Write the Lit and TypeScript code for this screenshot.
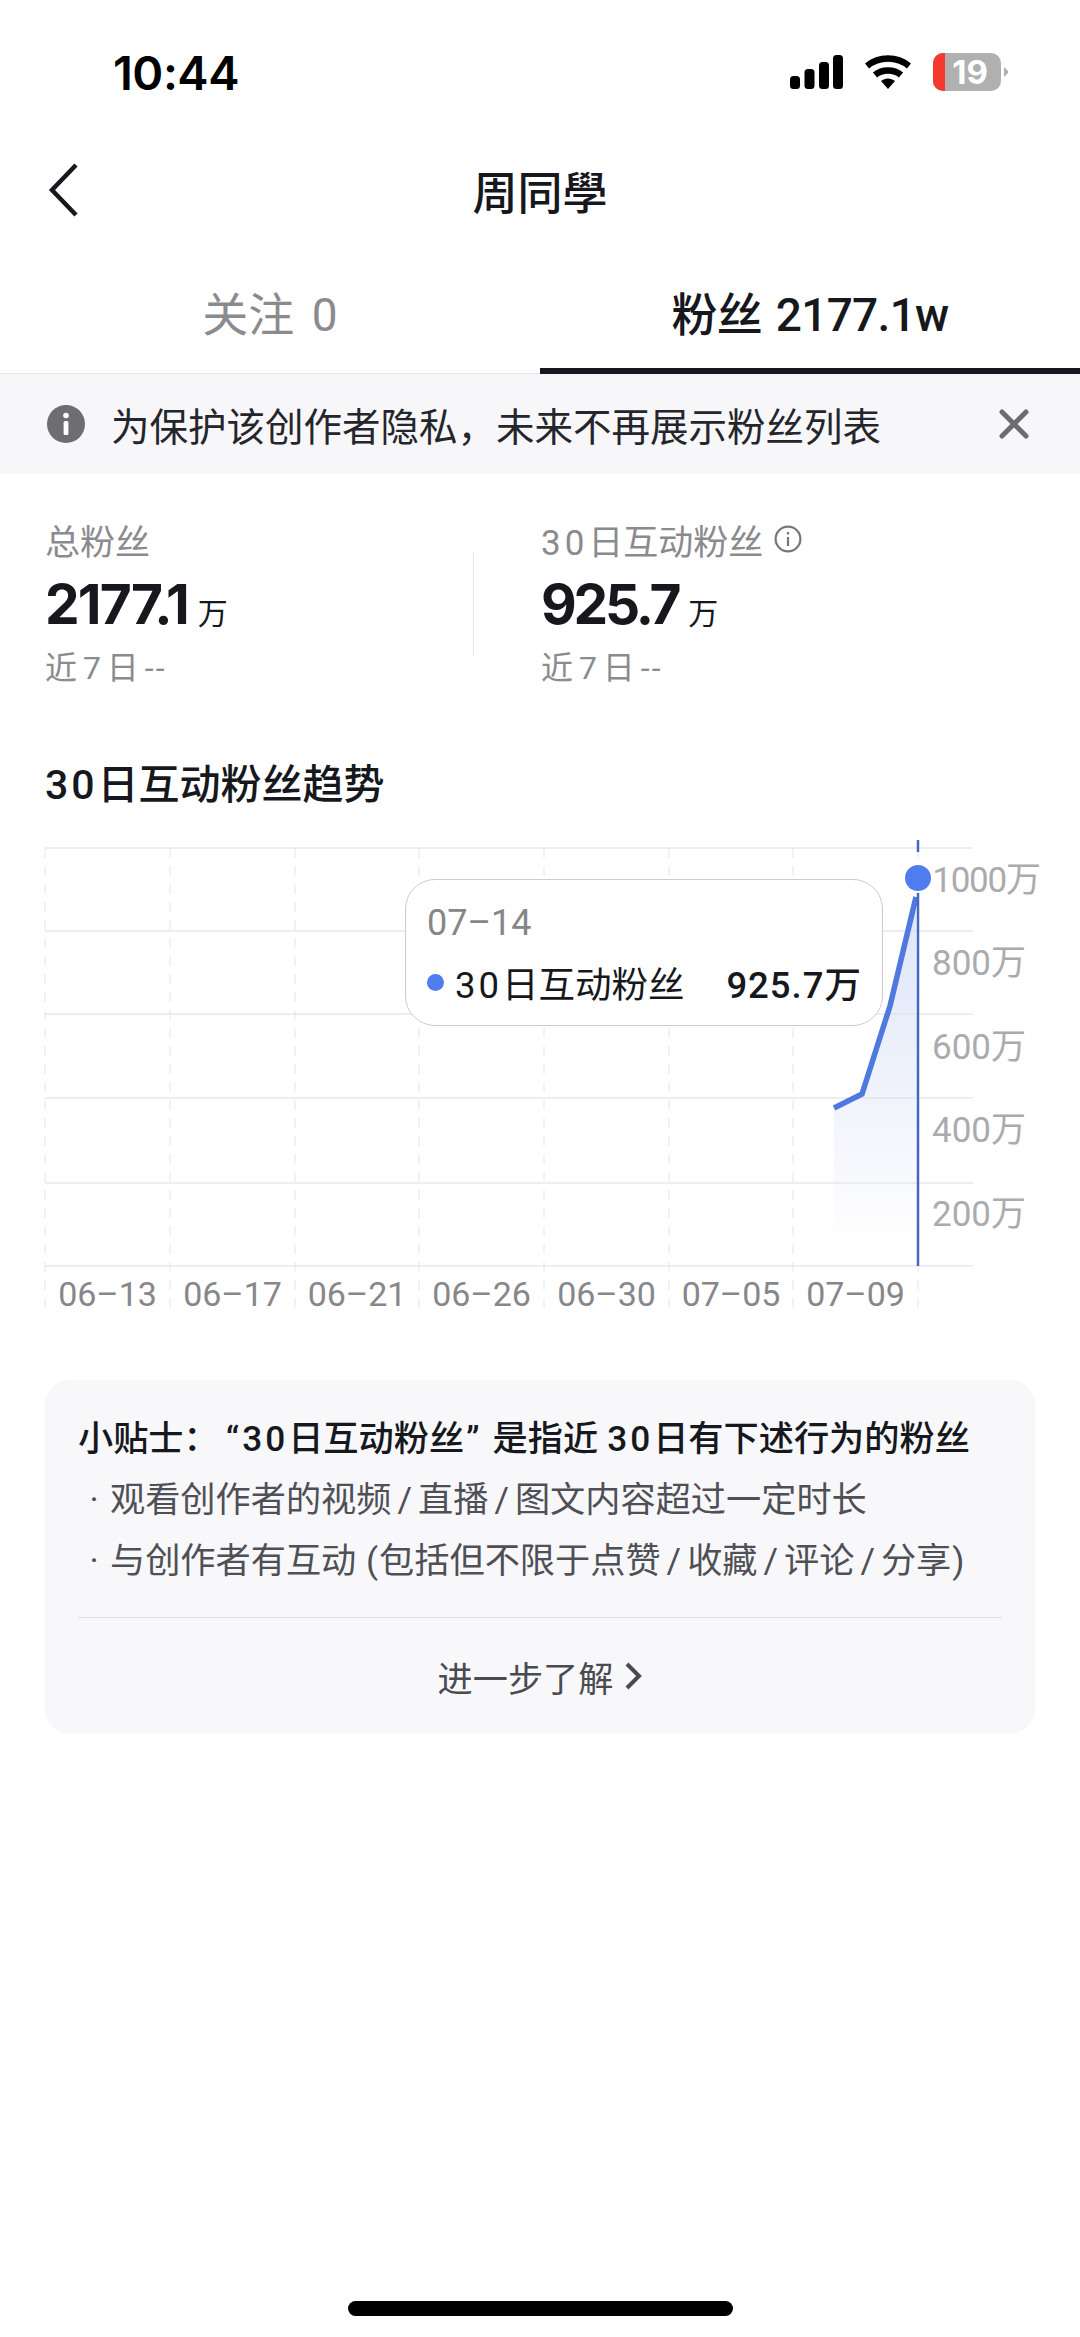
import { LitElement, html, svg, css } from 'lit';
import { customElement } from 'lit/decorators.js';

const GRID_Y = [8, 91, 174, 258, 343, 426];
const GRID_X = [45, 170, 295, 419, 544, 669, 793, 918];
const X_LABELS = ['06–13', '06–17', '06–21', '06–26', '06–30', '07–05', '07–09'];
const Y_LABELS: [string, number, number][] = [
  ['800万', 979, 126],
  ['600万', 979, 210],
  ['400万', 979, 293],
  ['200万', 979, 377],
];

@customElement('app-root')
export class AppRoot extends LitElement {
  static styles = css`
    :host {
      display: block;
      width: 1080px;
      height: 2337px;
      background: #fff;
      color: #16181d;
      font-family: 'Roboto', 'Noto Sans CJK SC', sans-serif;
      overflow: hidden;
    }

    .num {
      letter-spacing: 3px;
    }

    .status {
      display: flex;
      justify-content: space-between;
      align-items: center;
      height: 144px;
      padding: 0 72px 0 113px;
      box-sizing: border-box;
    }
    .time {
      font-family: 'Inter', sans-serif;
      font-size: 47px;
      font-weight: 600;
      letter-spacing: -0.5px;
      color: #000;
    }
    .status-icons {
      display: flex;
      align-items: center;
      gap: 22px;
    }

    .nav {
      display: flex;
      align-items: center;
      justify-content: center;
      position: relative;
      height: 96px;
      font-size: 45px;
      margin-top: -2px;
      font-weight: 500;
    }
    .back {
      position: absolute;
      left: 46px;
      top: 20px;
    }

    .tabs {
      display: flex;
      height: 136px;
      border-bottom: 1px solid #e6e6e8;
      box-sizing: border-box;
      font-size: 46px;
      word-spacing: 6px;
    }
    .tab {
      flex: 1;
      display: flex;
      align-items: center;
      justify-content: center;
      padding-top: 10px;
      color: #8b8b8f;
      box-sizing: border-box;
    }
    .tab.on {
      color: #16181d;
      font-weight: 500;
      padding-top: 15px;
      letter-spacing: -0.7px;
      word-spacing: 3px;
      border-bottom: 6px solid #16181d;
      margin-bottom: -1px;
    }

    .notice {
      display: flex;
      align-items: center;
      height: 100px;
      padding: 0 51px 0 47px;
      background: #f7f7fa;
      font-size: 38.5px;
      color: #24262b;
    }
    .notice span {
      flex: 1;
      margin-left: 26px;
    }

    .stats {
      display: flex;
      padding: 40px 0 0 45px;
    }
    .stat {
      display: flex;
      flex-direction: column;
    }
    .stat.first {
      width: 428px;
    }
    .rule {
      width: 1px;
      height: 104px;
      margin-top: 38px;
      margin-right: 67px;
      background: #e8e8ea;
    }
    .label {
      display: flex;
      align-items: center;
      gap: 11px;
      height: 50px;
      font-size: 35px;
      color: #8a8a8f;
    }
    .label .num {
      letter-spacing: 4px;
    }
    .value {
      display: flex;
      align-items: baseline;
      gap: 10px;
      height: 72px;
      margin-top: 4px;
      font-family: 'Inter', 'Noto Sans CJK SC', sans-serif;
      font-size: 55px;
      line-height: 72px;
      font-weight: 700;
      letter-spacing: -1.8px;
    }
    .value.tight {
      letter-spacing: -3.2px;
    }
    .value small {
      font-family: 'Noto Sans CJK SC', sans-serif;
      font-size: 30px;
      font-weight: 400;
      letter-spacing: 0;
    }
    .recent {
      height: 46px;
      margin-top: 5px;
      font-size: 32px;
      line-height: 46px;
      word-spacing: -2px;
      color: #8a8a8f;
    }
    .dashes {
      letter-spacing: 2px;
    }

    .chart-title {
      margin: 67px 0 0 45px;
      height: 54px;
      font-size: 41px;
      line-height: 54px;
      font-weight: 500;
    }

    .chart {
      position: relative;
      margin-top: 28px;
      height: 480px;
    }
    .chart svg {
      display: block;
    }
    .chart text {
      font-family: 'Roboto', 'Noto Sans CJK SC', sans-serif;
      font-size: 34px;
    }
    .chart text.side {
      font-size: 35px;
    }
    .chart text.wide {
      letter-spacing: -1.2px;
    }
    .tooltip {
      position: absolute;
      left: 405px;
      top: 39px;
      width: 478px;
      height: 147px;
      box-sizing: border-box;
      padding: 18px 20px 0 21px;
      background: #fff;
      border: 1px solid #ccccd0;
      border-radius: 30px;
    }
    .tip-date {
      height: 50px;
      font-size: 36px;
      line-height: 50px;
      color: #86868a;
    }
    .tip-row {
      display: flex;
      align-items: center;
      height: 52px;
      margin-top: 8px;
      font-size: 36.5px;
    }
    .tip-dot {
      width: 17px;
      height: 17px;
      border-radius: 50%;
      background: #4f7df0;
      margin-right: 11px;
    }
    .tip-name {
      flex: 1;
    }
    .tip-value {
      font-weight: 500;
      letter-spacing: 1px;
    }

    .tips {
      margin: 60px 45px 0;
      height: 353px;
      box-sizing: border-box;
      padding: 29px 33px 0;
      background: #f8f8fb;
      border-radius: 24px;
      font-size: 35.2px;
      color: #4f5055;
    }
    .tips p {
      margin: 0;
      height: 60px;
      line-height: 60px;
      white-space: nowrap;
    }
    .tips p.head {
      color: #16181d;
      font-weight: 500;
    }
    .tips p.item {
      margin-top: 1px;
    }
    .tips p.item::before {
      content: '·';
      display: inline-block;
      width: 32px;
      text-align: center;
    }
    .open-q {
      margin: 0 3px 0 7px;
    }
    .close-q {
      margin: 0 13px 0 2px;
    }
    .gap {
      margin-left: 9px;
    }
    .slash {
      margin: 0 6px;
    }
    .paren {
      margin: 0 1px;
    }
    .more {
      display: flex;
      align-items: center;
      justify-content: center;
      gap: 11px;
      height: 116px;
      margin-top: 26px;
      border-top: 1px solid #e2e2e6;
      font-size: 35.2px;
      color: #4a4b50;
    }

    .home {
      width: 385px;
      height: 15px;
      margin: 568px auto 0;
      border-radius: 8px;
      background: #000;
    }
  `;

  private statusIcons() {
    return html`<div class="status-icons">
      <svg width="53" height="34" viewBox="0 0 53 34" fill="#000">
        <rect x="0" y="21" width="10" height="13" rx="3.5" />
        <rect x="14.5" y="14" width="10" height="20" rx="3.5" />
        <rect x="29" y="7" width="10" height="27" rx="3.5" />
        <rect x="43" y="0" width="10" height="34" rx="3.5" />
      </svg>
      <svg width="46" height="34" viewBox="0 0 46 34" fill="none" stroke="#000" stroke-width="6.5">
        <path d="M2 11 C14 1 32 1 44 11" />
        <path d="M10 20 C17 14 29 14 36 20" />
        <path d="M16 26 L23 34 L30 26 C26 22.5 20 22.5 16 26 Z" fill="#000" stroke="none" />
      </svg>
      <svg width="75" height="38" viewBox="0 0 75 38">
        <rect x="0" y="0" width="68" height="38" rx="10" fill="#b0b0b0" />
        <path d="M10 0 H12 V38 H10 A10 10 0 0 1 0 28 V10 A10 10 0 0 1 10 0 Z" fill="#f4392f" />
        <path d="M71 14 L75 18 V20 L71 24 Z" fill="#b0b0b0" />
        <text x="37" y="31" text-anchor="middle" font-family="Inter, sans-serif" font-size="33" font-weight="700" fill="#fff">19</text>
      </svg>
    </div>`;
  }

  private chart() {
    return svg`<svg width="1080" height="480" viewBox="0 0 1080 480">
      <defs>
        <linearGradient id="area" x1="0" y1="0" x2="0" y2="1">
          <stop offset="0" stop-color="#dce5f9" />
          <stop offset="0.6" stop-color="#f3f5fc" />
          <stop offset="0.95" stop-color="#ffffff" />
        </linearGradient>
      </defs>
      <path d="M834 268 L862 254 L890 166 L916 57 L918 426 L834 426 Z" fill="url(#area)" />
      ${GRID_X.map(x => svg`<line x1=${x} x2=${x} y1="8" y2="470" stroke="#e6e6ea" stroke-width="1" stroke-dasharray="10 8" />`)}
      ${GRID_Y.map(y => svg`<line x1="45" x2="973" y1=${y} y2=${y} stroke="#dedee2" stroke-width="1.2" />`)}
      <path d="M834 268 L862 254 L890 166 L916 57" fill="none" stroke="#4f79de" stroke-width="5.5" />
      <line x1="918" x2="918" y1="0" y2="12" stroke="#4468bd" stroke-width="2.5" />
      <line x1="918" x2="918" y1="50" y2="426" stroke="#4468bd" stroke-width="2.5" />
      <circle cx="918" cy="38" r="15" fill="#fff" />
      <circle cx="918" cy="38" r="13" fill="#4f7df0" />
      <text class="side wide" x="986" y="43" text-anchor="middle" dominant-baseline="middle" fill="#ababae">1000万</text>
      ${Y_LABELS.map(([t, x, y]) => svg`<text class="side" x=${x} y=${y} text-anchor="middle" dominant-baseline="middle" fill="#ababae">${t}</text>`)}
      ${X_LABELS.map((t, i) => svg`<text x=${(GRID_X[i] + GRID_X[i + 1]) / 2} y="466" text-anchor="middle" fill="#87878b">${t}</text>`)}
    </svg>`;
  }

  render() {
    return html`
      <div class="status">
        <div class="time">10:44</div>
        ${this.statusIcons()}
      </div>

      <div class="nav">
        <svg class="back" width="34" height="56" viewBox="0 0 34 56" fill="none" stroke="#16181d" stroke-width="4.5">
          <path d="M30 3 L6 28 L30 53" />
        </svg>
        周同學
      </div>

      <div class="tabs">
        <div class="tab">关注 0</div>
        <div class="tab on">粉丝 2177.1w</div>
      </div>

      <div class="notice">
        <svg width="38" height="38" viewBox="0 0 38 38">
          <circle cx="19" cy="19" r="19" fill="#6e6e72" />
          <circle cx="19" cy="10.5" r="2.8" fill="#fff" />
          <rect x="16.6" y="16" width="4.8" height="14" rx="1.5" fill="#fff" />
        </svg>
        <span>为保护该创作者隐私，未来不再展示粉丝列表</span>
        <svg width="30" height="30" viewBox="0 0 30 30" stroke="#6d6d70" stroke-width="5" stroke-linecap="round">
          <path d="M3 3 L27 27 M27 3 L3 27" />
        </svg>
      </div>

      <div class="stats">
        <div class="stat first">
          <div class="label">总粉丝</div>
          <div class="value">2177.1<small>万</small></div>
          <div class="recent">近 7 日 <span class="dashes">--</span></div>
        </div>
        <div class="rule"></div>
        <div class="stat">
          <div class="label">
            <span><span class="num">30</span>日互动粉丝</span>
            <svg width="28" height="28" viewBox="0 0 28 28" fill="none" stroke="#77777b" stroke-width="2.2">
              <circle cx="14" cy="14" r="12.4" />
              <path d="M14 12 V21 M14 7 V9.6" />
            </svg>
          </div>
          <div class="value tight">925.7<small>万</small></div>
          <div class="recent">近 7 日 <span class="dashes">--</span></div>
        </div>
      </div>

      <div class="chart-title"><span class="num">30</span>日互动粉丝趋势</div>

      <div class="chart">
        ${this.chart()}
        <div class="tooltip">
          <div class="tip-date">07–14</div>
          <div class="tip-row">
            <div class="tip-dot"></div>
            <div class="tip-name"><span class="num">30</span>日互动粉丝</div>
            <div class="tip-value">925.7万</div>
          </div>
        </div>
      </div>

      <div class="tips">
        <p class="head">小贴士：<span class="open-q">“</span><span class="num">30</span>日互动粉丝<span class="close-q">”</span>是指近<span class="num gap">30</span>日有下述行为的粉丝</p>
        <p class="item">观看创作者的视频<span class="slash">/</span>直播<span class="slash">/</span>图文内容超过一定时长</p>
        <p class="item">与创作者有互动 <span class="paren">(</span>包括但不限于点赞<span class="slash">/</span>收藏<span class="slash">/</span>评论<span class="slash">/</span>分享<span class="paren">)</span></p>
        <div class="more">
          进一步了解
          <svg width="18" height="28" viewBox="0 0 18 28" fill="none" stroke="#4a4b50" stroke-width="4">
            <path d="M3 2 L15 14 L3 26" />
          </svg>
        </div>
      </div>

      <div class="home"></div>
    `;
  }
}
